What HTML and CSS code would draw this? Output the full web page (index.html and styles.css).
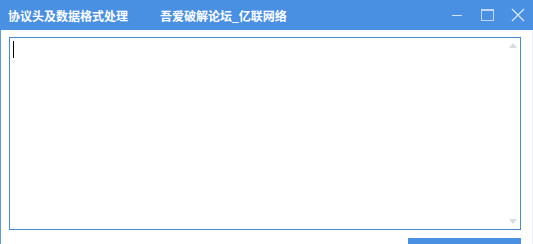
FILE: index.html
```html
<!DOCTYPE html>
<html>
<head>
  <meta charset="utf-8">
  <title>协议头及数据格式处理</title>
  <link rel="stylesheet" href="styles.css">
</head>
<body>
  <div class="window">
    <div class="titlebar">
      <div class="title">协议头及数据格式处理</div>
      <div class="subtitle">吾爱破解论坛_亿联网络</div>
      <div class="controls">
        <span class="ctl ctl-min">
          <svg width="12" height="12" viewBox="0 0 12 12"><path d="M1 6.5h10" stroke="#d3e3f8" stroke-width="1"/></svg>
        </span>
        <span class="ctl ctl-max">
          <svg width="13" height="13" viewBox="0 0 13 13"><rect x="0.5" y="0.5" width="12" height="11" fill="none" stroke="#c2d8f5" stroke-width="1"/><path d="M0.5 1.5h12" stroke="#c2d8f5"/></svg>
        </span>
        <span class="ctl ctl-close">
          <svg width="14" height="14" viewBox="0 0 14 14"><path d="M1 1L13 13M13 1L1 13" stroke="#e2ecfa" stroke-width="1.1"/></svg>
        </span>
      </div>
    </div>
    <div class="body">
      <div class="editor">
        <span class="caret"></span>
        <svg class="arrow arrow-up" width="8" height="5" viewBox="0 0 8 5"><path d="M0 5L4 0L8 5Z" fill="#d8dce2"/></svg>
        <svg class="arrow arrow-down" width="8" height="5" viewBox="0 0 8 5"><path d="M0 0L4 5L8 0Z" fill="#d8dce2"/></svg>
      </div>
      <div class="footer">
        <button class="action"></button>
      </div>
    </div>
  </div>
</body>
</html>
```

FILE: styles.css
```css
html, body {
  margin: 0;
  padding: 0;
  background: #ffffff;
  overflow: hidden;
}

body {
  font-family: "Noto Sans CJK SC", "Microsoft YaHei", sans-serif;
}

.window {
  width: 533px;
  height: 244px;
  display: flex;
  flex-direction: column;
  overflow: hidden;
}

.titlebar {
  height: 30px;
  flex: none;
  background-color: #4a90e2;
  display: flex;
  align-items: center;
  color: #ffffff;
  font-size: 12px;
  font-weight: bold;
}

.title {
  margin-left: 8px;
  width: 152px;
}

.subtitle {
  flex: 1;
}

.controls {
  display: flex;
  align-items: center;
  height: 30px;
}

.ctl {
  display: flex;
  align-items: center;
  justify-content: center;
  height: 30px;
}

.ctl svg {
  display: block;
}

.ctl-min {
  width: 12px;
  margin-right: 18px;
}

.ctl-max {
  width: 13px;
  margin-right: 17px;
}

.ctl-close {
  width: 14px;
  margin-right: 8px;
}

.body {
  flex: 1;
  min-height: 0;
  border-left: 1px solid #5a9bd8;
  border-right: 1px solid #e8f0fa;
  padding: 7px 11px 0 8px;
  display: flex;
  flex-direction: column;
}

.editor {
  position: relative;
  flex: none;
  height: 191px;
  border: 1px solid #4a8ccb;
  background: #ffffff;
}

.caret {
  position: absolute;
  left: 3px;
  top: 3px;
  width: 1px;
  height: 17px;
  background: #000000;
}

.arrow {
  position: absolute;
  right: 3px;
}

.arrow-up {
  top: 5px;
}

.arrow-down {
  bottom: 5px;
}

.footer {
  display: flex;
  justify-content: flex-end;
  padding-top: 8px;
}

.action {
  display: block;
  width: 113px;
  height: 6px;
  border: none;
  padding: 0;
  background-color: #4a90e2;
}
```
